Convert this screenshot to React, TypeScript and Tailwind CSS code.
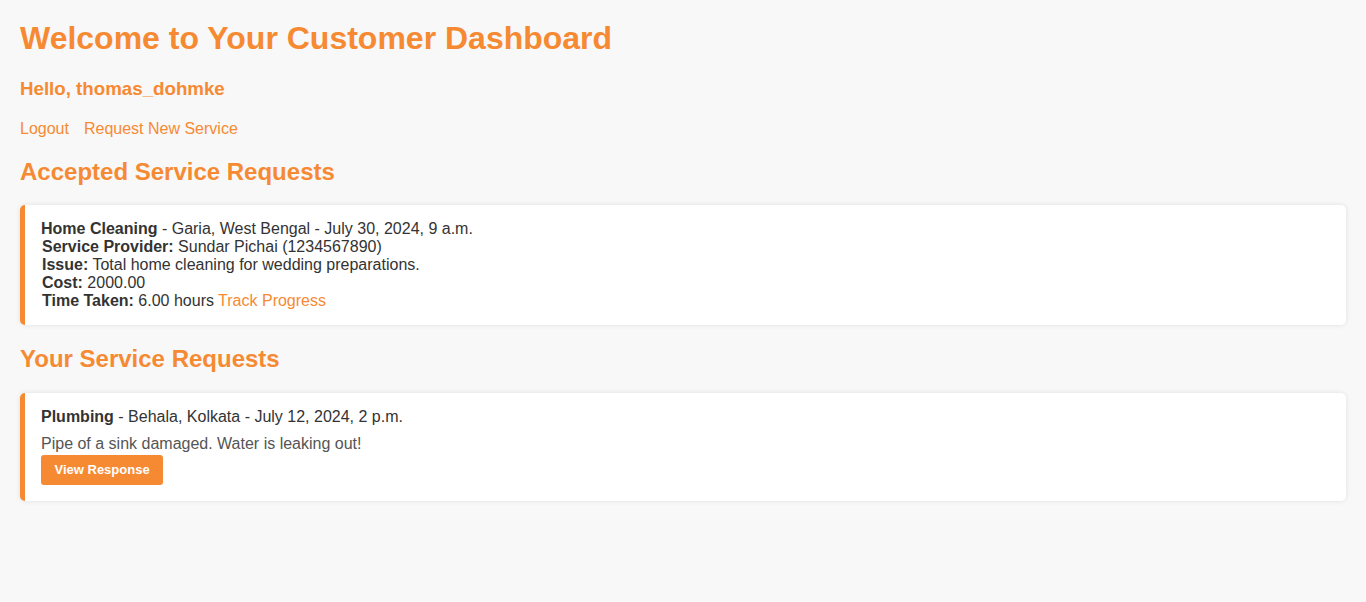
const accepted = {
  service: "Home Cleaning",
  location: "Garia, West Bengal",
  when: "July 30, 2024, 9 a.m.",
  provider: "Sundar Pichai (1234567890)",
  issue: "Total home cleaning for wedding preparations.",
  cost: "2000.00",
  time: "6.00 hours",
};

const request = {
  service: "Plumbing",
  location: "Behala, Kolkata",
  when: "July 12, 2024, 2 p.m.",
  description: "Pipe of a sink damaged. Water is leaking out!",
};

export default function App() {
  return (
    <div
      className="min-h-screen bg-[#f8f8f8] p-5 text-[#333] text-[16px]"
      style={{ fontFamily: '"Liberation Sans", Arial, sans-serif' }}
    >
      <h1 className="text-[32px] font-bold leading-[37px] text-[#f68a33]">
        Welcome to Your Customer Dashboard
      </h1>
      <h3 className="mt-[21px] text-[18.72px] font-bold leading-[22px] text-[#f68a33]">
        Hello, thomas_dohmke
      </h3>
      <div className="mt-[20px] flex gap-[15px] leading-[18px] text-[#f68a33]">
        <a href="#">Logout</a>
        <a href="#">Request New Service</a>
      </div>

      <h2 className="mt-[20px] text-[24px] font-bold leading-[28px] text-[#f68a33]">
        Accepted Service Requests
      </h2>
      <div className="mt-[19px] rounded-[5px] border-l-[5px] border-[#f68a33] bg-white py-[15px] pl-[16px] pr-[15px] shadow-[0_0_5px_rgba(0,0,0,0.1)]">
        <div className="leading-[18px]">
          <div>
            <strong>{accepted.service}</strong> - {accepted.location} - {accepted.when}
          </div>
          <div className="pl-px">
            <strong>Service Provider:</strong> {accepted.provider}
          </div>
          <div className="pl-px">
            <strong>Issue:</strong> {accepted.issue}
          </div>
          <div className="pl-px">
            <strong>Cost:</strong> {accepted.cost}
          </div>
          <div className="pl-px">
            <strong>Time Taken:</strong> {accepted.time}{" "}
            <a href="#" className="text-[#f68a33]">
              Track Progress
            </a>
          </div>
        </div>
      </div>

      <h2 className="mt-[20px] text-[24px] font-bold leading-[28px] text-[#f68a33]">
        Your Service Requests
      </h2>
      <div className="mt-[20px] rounded-[5px] border-l-[5px] border-[#f68a33] bg-white pt-[15px] pb-[16px] pl-[16px] pr-[15px] shadow-[0_0_5px_rgba(0,0,0,0.1)]">
        <div className="leading-[18px]">
          <strong>{request.service}</strong> - {request.location} - {request.when}
        </div>
        <p className="mt-[9px] leading-[18px] text-[#555]">{request.description}</p>
        <button className="mt-[2px] h-[30px] rounded-[3px] bg-[#f68a33] px-[13.5px] text-[13px] font-bold text-white">
          View Response
        </button>
      </div>
    </div>
  );
}
